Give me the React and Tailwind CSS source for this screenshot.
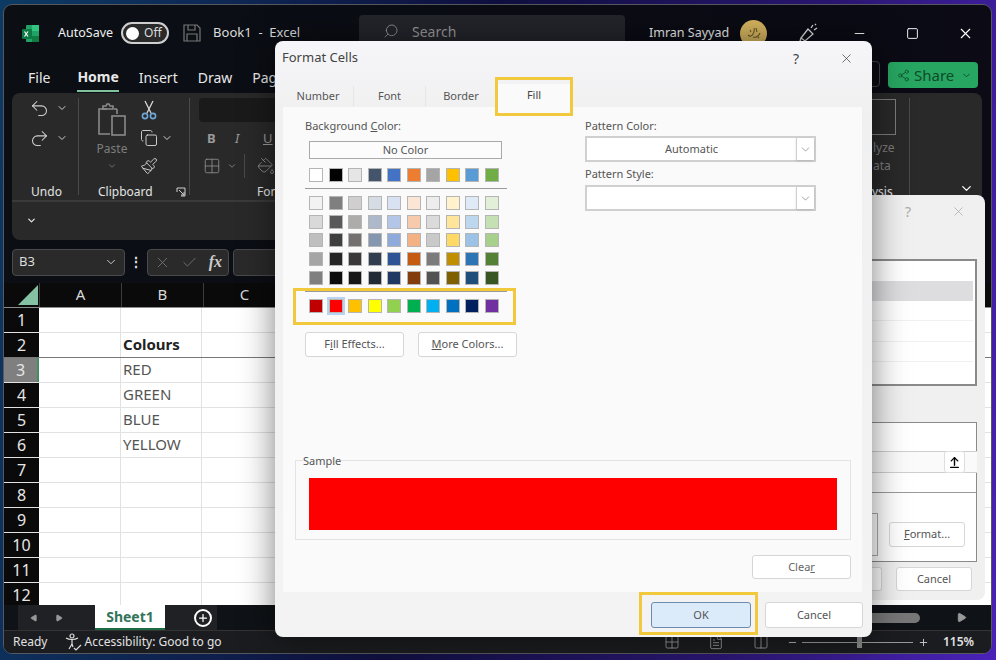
import React from 'react'
import { ChevronDown, Undo2, Redo2, Copy, Paintbrush, Search, X, Square, Minus, Plus, Grid2x2, PaintBucket, Share2, Play, Check, ArrowUpFromLine, FileText, Columns2 } from 'lucide-react'

const theme = ['#ffffff', '#000000', '#e7e6e6', '#44546a', '#4472c4', '#ed7d31', '#a5a5a5', '#ffc000', '#5b9bd5', '#70ad47']
const shades = [
  ['#f2f2f2', '#7f7f7f', '#d0cece', '#d6dce4', '#d9e2f3', '#fbe5d5', '#ededed', '#fff2cc', '#deeaf6', '#e2efd9'],
  ['#d9d9d9', '#595959', '#aeabab', '#adb9ca', '#b4c6e7', '#f7caac', '#dbdbdb', '#fee599', '#bdd7ee', '#c5e0b3'],
  ['#bfbfbf', '#3f3f3f', '#757070', '#8496b0', '#8eaadb', '#f4b183', '#c9c9c9', '#ffd965', '#9cc3e5', '#a8d08d'],
  ['#a5a5a5', '#262626', '#3a3838', '#323e4f', '#2e5496', '#c55a11', '#7b7b7b', '#bf8f00', '#2e75b5', '#538135'],
  ['#7f7f7f', '#0c0c0c', '#171616', '#222a35', '#1f3763', '#833c0b', '#525252', '#7f6000', '#1e4e79', '#375623'],
]
const standard = ['#c00000', '#ff0000', '#ffc000', '#ffff00', '#92d050', '#00b050', '#00b0f0', '#0070c0', '#002060', '#7030a0']

const cells = { 2: 'Colours', 3: 'RED', 4: 'GREEN', 5: 'BLUE', 6: 'YELLOW' }

const Swatches = ({ colors, selected }) => (
  <div className="flex justify-between w-[190px]">
    {colors.map((c, i) => (
      <span key={i} className={`w-[14px] h-[14px] border border-[#b5b5b5] ${selected === i ? 'outline-2 outline-[#b9d4ee]' : ''}`} style={{ backgroundColor: c }} />
    ))}
  </div>
)

const DlgButton = ({ className = '', children }) => (
  <div className={`flex items-center justify-center rounded-[3px] border border-[#d6d6d6] bg-white text-[11px] text-[#555] ${className}`}>{children}</div>
)

const SelectBox = ({ text }) => (
  <div className="flex h-[26px] w-[231px] border-2 border-[#d0d0d0] bg-white text-[11px] text-[#555]">
    <div className="flex-1 flex items-center justify-center">{text}</div>
    <div className="w-[18px] flex items-center justify-center border-l border-[#cfcfcf] shadow-sm"><ChevronDown size={13} strokeWidth={1} /></div>
  </div>
)

const FormatCells = () => (
  <div className="absolute left-[275px] top-[41px] w-[597px] h-[596px] rounded-[8px] bg-[linear-gradient(180deg,#f6f6fa,#f0f0f0_12%,#f3f3f3)] shadow-[0_0_34px_rgba(0,0,0,0.5)] flex flex-col text-[#555]">
    <div className="h-[43px] shrink-0 flex items-center justify-between pl-[7px] pr-[18px] pb-[11px] pt-[2px]">
      <span className="text-[13px] text-[#444]">Format Cells</span>
      <div className="flex items-center gap-[40px] text-[#444]">
        <span className="text-[14px]">?</span>
        <X size={15} strokeWidth={1.2} />
      </div>
    </div>
    <div className="ml-[8px] flex h-[23px] shrink-0 text-[11px] pt-[2px]">
      <div className="w-[71px] flex items-center justify-center border-r border-[#e6e6e6]">Number</div>
      <div className="w-[72px] flex items-center justify-center border-r border-[#e6e6e6]">Font</div>
      <div className="w-[70px] flex items-center justify-center">Border</div>
      <div className="w-[76px] flex items-center justify-center bg-[#fafafa] -mt-[2px] text-[#444]">Fill</div>
    </div>
    <div className="ml-[8px] mr-[10px] h-[485px] bg-[#fafafa] flex flex-col">
      <div className="flex h-[256px] pl-[22px]">
        <div className="w-[280px] pt-[11px]">
          <div className="text-[11px] leading-[16px]">Background <span className="underline">C</span>olor:</div>
          <div className="mt-[7px] ml-[4px] w-[193px] h-[18px] flex items-center justify-center border border-[#a9a9a9] bg-[#fcfcfc] text-[11px]">No Color</div>
          <div className="mt-[9px] ml-[4px]"><Swatches colors={theme} /></div>
          <div className="mt-[6px] w-[202px] border-t border-[#9a9a9a]" />
          <div className="mt-[7px] ml-[4px] flex flex-col gap-[4.7px]">
            {shades.map((row, i) => <Swatches key={i} colors={row} />)}
          </div>
          <div className="mt-[6px] w-[202px] border-t border-[#9a9a9a]" />
          <div className="mt-[7px] ml-[4px]"><Swatches colors={standard} selected={1} /></div>
          <div className="mt-[19px] flex gap-[14px]">
            <DlgButton className="w-[99px] h-[25px]">F<span className="underline">i</span>ll Effects...</DlgButton>
            <DlgButton className="w-[99px] h-[25px]"><span className="underline">M</span>ore Colors...</DlgButton>
          </div>
        </div>
        <div className="pt-[11px]">
          <div className="text-[11px] leading-[16px]">Pattern Color:</div>
          <div className="mt-[2px]"><SelectBox text="Automatic" /></div>
          <div className="mt-[4px] text-[11px] leading-[16px]">Pattern Style:</div>
          <div className="mt-[3px]"><SelectBox text="" /></div>
        </div>
      </div>
      <div className="mt-[97px] ml-[12px] relative w-[556px] h-[80px] border border-[#e3e3e3] flex items-end">
        <span className="absolute left-[7px] -top-[7px] bg-[#fafafa] text-[11px] leading-[14px]">Sample</span>
        <div className="ml-[13px] mb-[9px] w-[528px] h-[52px] bg-[#ff0000]" />
      </div>
      <div className="mt-[15px] mr-[11px] flex justify-end">
        <DlgButton className="w-[99px] h-[24px] text-[#666]">Clea<span className="underline">r</span></DlgButton>
      </div>
    </div>
    <div className="mt-[10px] mr-[9px] flex justify-end gap-[14px]">
      <div className="w-[100px] h-[26px] flex items-center justify-center rounded-[3px] border border-[#6a8cb0] bg-[#dcebfa] text-[11px]">OK</div>
      <DlgButton className="w-[98px] h-[26px]">Cancel</DlgButton>
    </div>
  </div>
)

const BackDialog = () => (
  <div className="absolute left-[860px] top-[195px] w-[125px] h-[405px] rounded-[8px] bg-[#f0f0f0] flex flex-col text-[#777]">
    <div className="h-[32px] shrink-0 flex items-center justify-end gap-[40px] pr-[19px]">
      <span className="text-[14px] text-[#aaa]">?</span>
      <X size={15} strokeWidth={1.2} className="text-[#aaa]" />
    </div>
    <div className="mt-[32px] mr-[8px] h-[127px] border-2 border-[#8a8a8a] border-l-0 bg-white flex flex-col pt-[20px] pr-[2px]">
      <div className="h-[20px] bg-[#dddde0]" />
      <div className="h-[20px] border-b border-[#f0f0f0]" />
      <div className="h-[21px] border-b border-[#f0f0f0]" />
      <div className="h-[20px] border-b border-[#f0f0f0]" />
    </div>
    <div className="mt-[36px] mr-[8px] h-[140px] border border-[#8a8a8a] border-l-0 bg-white flex flex-col">
      <div className="mt-[28px] mr-[-1px] h-[22px] shrink-0 bg-[#fafafa] border-y border-[#cfcfcf] flex justify-end pr-[12px]">
        <div className="w-[21px] -my-[1px] flex items-center justify-center border border-[#dedede] rounded-[3px] bg-white"><ArrowUpFromLine size={13} strokeWidth={2.6} className="text-black" /></div>
      </div>
      <div className="mt-[19px] border-t border-[#9a9a9a]" />
      <div className="flex justify-between items-center mt-[20px]">
        <div className="ml-[12px] w-[6px] h-[43px] bg-white border border-[#aaa] border-l-0" />
        <DlgButton className="mr-[11px] w-[76px] h-[25px]"><span className="underline">F</span>ormat...</DlgButton>
      </div>
    </div>
    <div className="mt-[5px] flex justify-between pr-[13px]">
      <DlgButton className="ml-[12px] w-[10px] h-[24px] border-l-0 rounded-l-none" />
      <DlgButton className="w-[76px] h-[24px]">Cancel</DlgButton>
    </div>
  </div>
)

const RibbonLabel = ({ className = '', children }) => <div className={`text-[12px] leading-[14px] text-[#e4e4e4] text-center ${className}`}>{children}</div>

const Ribbon = () => (
  <div className="ml-[8px] mr-[9px] h-[147px] rounded-[8px] bg-[#292929] flex flex-col shrink-0">
    <div className="h-[109px] flex border-b-2 border-[#3a3a3a] text-[#cfcfcf]">
      <div className="w-[66px] pl-[17px] flex flex-col">
        <div className="flex items-center gap-[6px] h-[30px]"><Undo2 size={21} strokeWidth={1.2} /><ChevronDown size={12} /></div>
        <div className="flex items-center gap-[6px] h-[30px]"><Redo2 size={21} strokeWidth={1.2} /><ChevronDown size={12} /></div>
        <RibbonLabel className="mt-[32px] -ml-[14px]">Undo</RibbonLabel>
      </div>
      <div className="w-px my-[5px] bg-[#4a4a4a]" />
      <div className="w-[110px] pl-[11px] pt-[4px] relative">
        <div className="flex">
          <div className="w-[44px] mt-[6px] flex flex-col items-center text-[#7d7d7d]">
            <svg width="32" height="34" viewBox="0 0 32 34" fill="none" stroke="#8a8a8a" strokeWidth="1.6">
              <path d="M11 6H3v25h11M21 6h-3M21 6v5" />
              <path d="M7 6h10V3h-3l-1-2H11l-1 2H7z" />
              <rect x="16" y="13" width="13" height="19" />
            </svg>
            <span className="text-[12px] leading-[16px] mt-[4px]">Paste</span>
            <ChevronDown size={10} className="mt-[4px]" />
          </div>
          <div className="ml-[6px] -mt-[1px] flex flex-col">
            <div className="h-[28px] flex items-center">
              <svg width="18" height="20" viewBox="0 0 18 20" fill="none" strokeWidth="1.3">
                <path d="M5 1l6 12M13 1L7 13" stroke="#d8d8d8" />
                <circle cx="5" cy="16" r="2.6" stroke="#6ea7d8" strokeWidth="1.6" />
                <circle cx="13" cy="16" r="2.6" stroke="#6ea7d8" strokeWidth="1.6" />
              </svg>
            </div>
            <div className="h-[28px] flex items-center gap-[3px]"><Copy size={18} strokeWidth={1.3} /><ChevronDown size={12} /></div>
            <div className="h-[28px] flex items-center"><Paintbrush size={18} strokeWidth={1.3} /></div>
          </div>
        </div>
        <RibbonLabel className="absolute left-[19px] top-[92px]">Clipboard</RibbonLabel>
        <svg className="absolute left-[97px] top-[94px]" width="10" height="10" viewBox="0 0 10 10" fill="none" stroke="#d0d0d0"><path d="M1 5V1h8v8H5M3 3l5 5M8 5v3H5" /></svg>
      </div>
      <div className="w-px my-[5px] bg-[#4a4a4a]" />
      <div className="pl-[9px] pt-[5px] flex-1 relative">
        <div className="w-[140px] h-[24px] rounded-[4px] bg-[#1a1a1a]" />
        <div className="flex gap-[16px] mt-[7px] text-[13px] leading-[18px] text-[#9a9a9a] pl-[8px]">
          <b className="w-[12px]">B</b><i className="w-[12px]">I</i><span className="underline w-[12px]">U</span>
        </div>
        <div className="flex items-center gap-[6px] mt-[7px] pl-[4px] text-[#8a8a8a]">
          <Grid2x2 size={18} strokeWidth={1.2} />
          <ChevronDown size={10} />
          <span className="w-px h-[24px] bg-[#4a4a4a] mx-[1px]" />
          <PaintBucket size={18} strokeWidth={1.3} className="ml-[5px]" />
        </div>
        <div className="absolute left-[67px] top-[92px] text-[12px] leading-[14px] text-[#e4e4e4]">Font</div>
        <div className="absolute left-[670px] top-[6px] w-[36px] h-[36px] border border-[#7a7a7a]" />
        <div className="absolute left-[683px] top-[46px] text-[12px] leading-[18px] text-[#7a7a7a]">lyze<br />ata</div>
        <div className="absolute left-[657px] top-[92px] text-[12px] leading-[14px] text-[#e4e4e4]">Analysis</div>
        <div className="absolute left-[719px] top-[5px] bottom-[5px] w-px bg-[#4a4a4a]" />
        <ChevronDown size={15} className="absolute left-[769px] top-[88px] text-white" />
      </div>
    </div>
    <div className="h-[36px] flex items-center pl-[14px]"><ChevronDown size={11} strokeWidth={3} className="text-[#ddd]" /></div>
  </div>
)

const Sheet = () => (
  <div className="flex-1 min-h-0 flex flex-col overflow-hidden">
    <div className="flex h-[24px] shrink-0 bg-[#0a0a0a] text-[#d8d8d8] text-[15px]">
      <div className="w-[35px] flex items-end justify-end pr-px pb-[2px]">
        <span className="w-[20px] h-[20px] bg-[#85c1a3] [clip-path:polygon(100%_0,100%_100%,0_100%)]" />
      </div>
      {['A', 'B', 'C'].map(c => (
        <div key={c} className="w-[82px] border-l border-[#3c3c3c] flex items-center justify-center pb-[2px]">{c}</div>
      ))}
    </div>
    <div className="shrink-0 border-t border-[#8c8c8c] bg-white">
      {[1, 2, 3, 4, 5, 6, 7, 8, 9, 10, 11, 12].map(r => (
        <div key={r} className={`flex h-[25px] border-b ${r === 2 ? 'border-[#777]' : 'border-[#e2e2e2]'}`}>
          <div className={`w-[35px] shrink-0 flex items-center justify-center text-[16px] text-[#e6e6e6] ${r === 3 ? 'bg-[#7f7f7f] border-r-2 border-[#3f8f63]' : 'bg-[#0a0a0a]'}`}>{r}</div>
          <div className="w-[82px] border-r border-[#e2e2e2]" />
          <div className={`w-[81px] border-r border-[#e2e2e2] pl-[2px] pb-[2px] flex items-center text-[15px] whitespace-nowrap ${r === 2 ? 'font-bold text-[#222]' : 'text-[#555]'}`}>{cells[r]}</div>
          <div className="flex-1" />
        </div>
      ))}
    </div>
  </div>
)

export default function App() {
  return (
    <div className="relative w-[996px] h-[660px] overflow-hidden bg-[linear-gradient(100deg,#0c3a63,#101040_45%,#2a1670_75%,#4a22b8)] font-['Noto_Sans',sans-serif]">
      <div className="ml-[3px] mr-[4px] mt-[4px] h-[650px] rounded-[9px] border border-[#55585e] bg-[linear-gradient(90deg,#0b0f14,#0b0a15)] flex flex-col overflow-hidden">
        {/* title bar */}
        <div className="h-[57px] shrink-0 flex items-center text-white text-[13px] pl-[17px] pb-[1px] relative">
          <svg width="19" height="19" viewBox="0 0 19 19" className="shrink-0">
            <rect x="5" y="1" width="13" height="17" rx="1" fill="#21a366" />
            <rect x="11" y="1" width="7" height="6" fill="#33c481" />
            <rect x="11" y="12" width="7" height="6" fill="#107c41" />
            <rect x="1" y="5" width="10" height="10" rx="1" fill="#0e7a43" />
            <path d="M3.5 7.5l3.5 5M7 7.5l-3.5 5" stroke="#fff" strokeWidth="1.2" />
          </svg>
          <span className="ml-[18px] text-[12.5px] text-[#eee]">AutoSave</span>
          <div className="ml-[8px] w-[48px] h-[22px] shrink-0 rounded-full border-2 border-[#cfcfcf] flex items-center pl-[3px] gap-[5px] bg-[#2a2a2a]">
            <span className="w-[13px] h-[13px] rounded-full bg-white" />
            <span className="text-[12px] text-[#ddd]">Off</span>
          </div>
          <svg className="ml-[14px] shrink-0" width="18" height="18" viewBox="0 0 18 18" fill="none" stroke="#777" strokeWidth="1.2">
            <path d="M1 1h13l3 3v13H1z" /><path d="M5 1v5h7V1M4 17v-7h10v7" />
          </svg>
          <span className="ml-[12px] text-[#ddd] whitespace-pre">Book1  -  Excel</span>
          <div className="absolute left-[355px] top-[10px] w-[266px] h-[32px] rounded-[4px] bg-[#23252b] flex items-center pl-[24px] gap-[13px] text-[14px] text-[#9a9a9a]">
            <Search size={16} strokeWidth={1.3} className="-scale-x-100" />Search
          </div>
          <span className="absolute left-[645px] text-[12.5px] text-[#eee]">Imran Sayyad</span>
          <span className="absolute left-[736px] w-[27px] h-[27px] rounded-full bg-[#d8b660] flex items-center justify-center">
            <svg width="18" height="18" viewBox="0 0 18 18" fill="none" stroke="#6b5a28" strokeWidth="1.1"><path d="M3 11c2 2 4 1 5-1s2-4 1-6M8 13c3 1 6-1 7-4M11 4l1 4M5 6l1 2M13 13l1 1" /></svg>
          </span>
          <svg className="absolute left-[794px]" width="22" height="22" viewBox="0 0 22 22" fill="none" stroke="#ddd" strokeWidth="1.3">
            <path d="M3 16l7-9 5 5-8 7zM3 16l-1 3 3 1" /><path d="M13 6l2-3M16 8l3-2M17 2l1 1" />
          </svg>
          <Minus size={15} strokeWidth={1.5} className="absolute left-[848px]" />
          <Square size={13} strokeWidth={1.7} className="absolute left-[902px]" />
          <X size={17} strokeWidth={1.6} className="absolute left-[953px]" />
        </div>
        {/* tabs */}
        <div className="h-[31px] shrink-0 flex items-center text-[14px] text-[#e8e8e8] relative pl-[24px] gap-[20px]">
          <span className="mr-[7px]">File</span>
          <span className="font-bold border-b-2 border-[#7fc29b] leading-[26px] h-[28px]">Home</span>
          <span>Insert</span>
          <span>Draw</span>
          <span>Page</span>
          <div className="absolute left-[850px] top-[-1px] w-[26px] h-[26px] border border-[#444] rounded-[4px]" />
          <div className="absolute left-[884px] top-[0px] w-[90px] h-[26px] rounded-[4px] bg-[#27a661] flex items-center pl-[9px] gap-[4px] text-[14px] text-[#0e4a2a]">
            <Share2 size={13} strokeWidth={1.4} /><span className="text-[15px]">Share</span><ChevronDown size={11} className="ml-[3px]" />
          </div>
        </div>
        <Ribbon />
        {/* formula bar */}
        <div className="h-[43px] shrink-0 flex items-center pl-[8px] pt-[1px] text-[#ddd]">
          <div className="w-[113px] h-[27px] rounded-[4px] border border-[#4a4a4a] bg-[#2a2a2a] flex items-center justify-between px-[6px] text-[13px]">B3<ChevronDown size={14} strokeWidth={1.5} /></div>
          <span className="w-[22px] text-center text-[14px] font-bold leading-none">⋮</span>
          <div className="w-[82px] h-[27px] rounded-[4px] border border-[#4a4a4a] bg-[#2a2a2a] flex items-center justify-between px-[6px] text-[#777]">
            <X size={17} strokeWidth={1.2} /><Check size={17} strokeWidth={1.2} /><span className="font-['Liberation_Serif',serif] italic font-bold text-[16px] text-[#ccc]">fx</span>
          </div>
          <div className="ml-[4px] flex-1 h-[27px] rounded-[4px] border border-[#4a4a4a] bg-[#2a2a2a] mr-[9px]" />
        </div>
        <Sheet />
        {/* sheet tabs */}
        <div className="h-[25px] shrink-0 flex bg-[#0f1216] text-[#999]">
          <div className="ml-[14px] w-[77px] bg-[#202124] flex items-center gap-[17px] pl-[12px]">
            <Play size={8} fill="currentColor" className="rotate-180" /><Play size={8} fill="currentColor" />
          </div>
          <div className="w-[70px] bg-white border-b-2 border-[#1d6b42] flex items-center justify-center text-[14px] font-bold text-[#33745a]">Sheet1</div>
          <div className="w-[52px] bg-[#202124] flex items-center justify-center pl-[24px]">
            <span className="w-[18px] h-[18px] shrink-0 rounded-full border-2 border-white flex items-center justify-center text-white"><Plus size={12} strokeWidth={2.5} /></span>
          </div>
          <div className="flex-1" />
          <div className="w-[125px] flex items-center">
            <div className="w-[54px] h-[10px] rounded-full bg-[#777]" />
            <Play size={11} fill="currentColor" className="ml-[36px]" />
          </div>
        </div>
        {/* status bar */}
        <div className="h-[23px] shrink-0 bg-[#1b1c1f] border-t border-[#333] flex items-center text-[12px] text-[#e2e2e2] pl-[9px] relative">
          <span>Ready</span>
          <svg className="ml-[18px]" width="18" height="18" viewBox="0 0 18 18" fill="none" stroke="#ddd" strokeWidth="1.2"><circle cx="7" cy="3" r="2" /><path d="M1 5c3 2 9 2 12 0M7 7v4M7 11l-3 5M7 11l1 3M9 15l2 2 5-5" /></svg>
          <span className="ml-[1px]">Accessibility: Good to go</span>
          <Grid2x2 size={16} strokeWidth={1.2} className="absolute left-[660px] text-[#aaa]" />
          <FileText size={16} strokeWidth={1.2} className="absolute left-[704px] text-[#aaa]" />
          <Columns2 size={16} strokeWidth={1.2} className="absolute left-[749px] text-[#aaa]" />
          <Minus size={11} className="absolute left-[783px] text-[#bbb]" />
          <span className="absolute left-[798px] w-[111px] h-px bg-[#999]" />
          <span className="absolute left-[853px] w-[5px] h-[11px] bg-[#888]" />
          <Plus size={11} className="absolute left-[914px] text-[#ccc]" />
          <span className="absolute left-[939px] text-[#e2e2e2] font-semibold">115%</span>
        </div>
      </div>
      <BackDialog />
      <FormatCells />
      {/* yellow callouts */}
      <div className="absolute left-[495px] top-[77px] w-[78px] h-[39px] border-[3px] border-[#f2c83c]" />
      <div className="absolute left-[293px] top-[288px] w-[223px] h-[37px] border-[3px] border-[#f2c83c]" />
      <div className="absolute left-[639px] top-[592px] w-[119px] h-[43px] border-[3px] border-[#f2c83c]" />
    </div>
  )
}
